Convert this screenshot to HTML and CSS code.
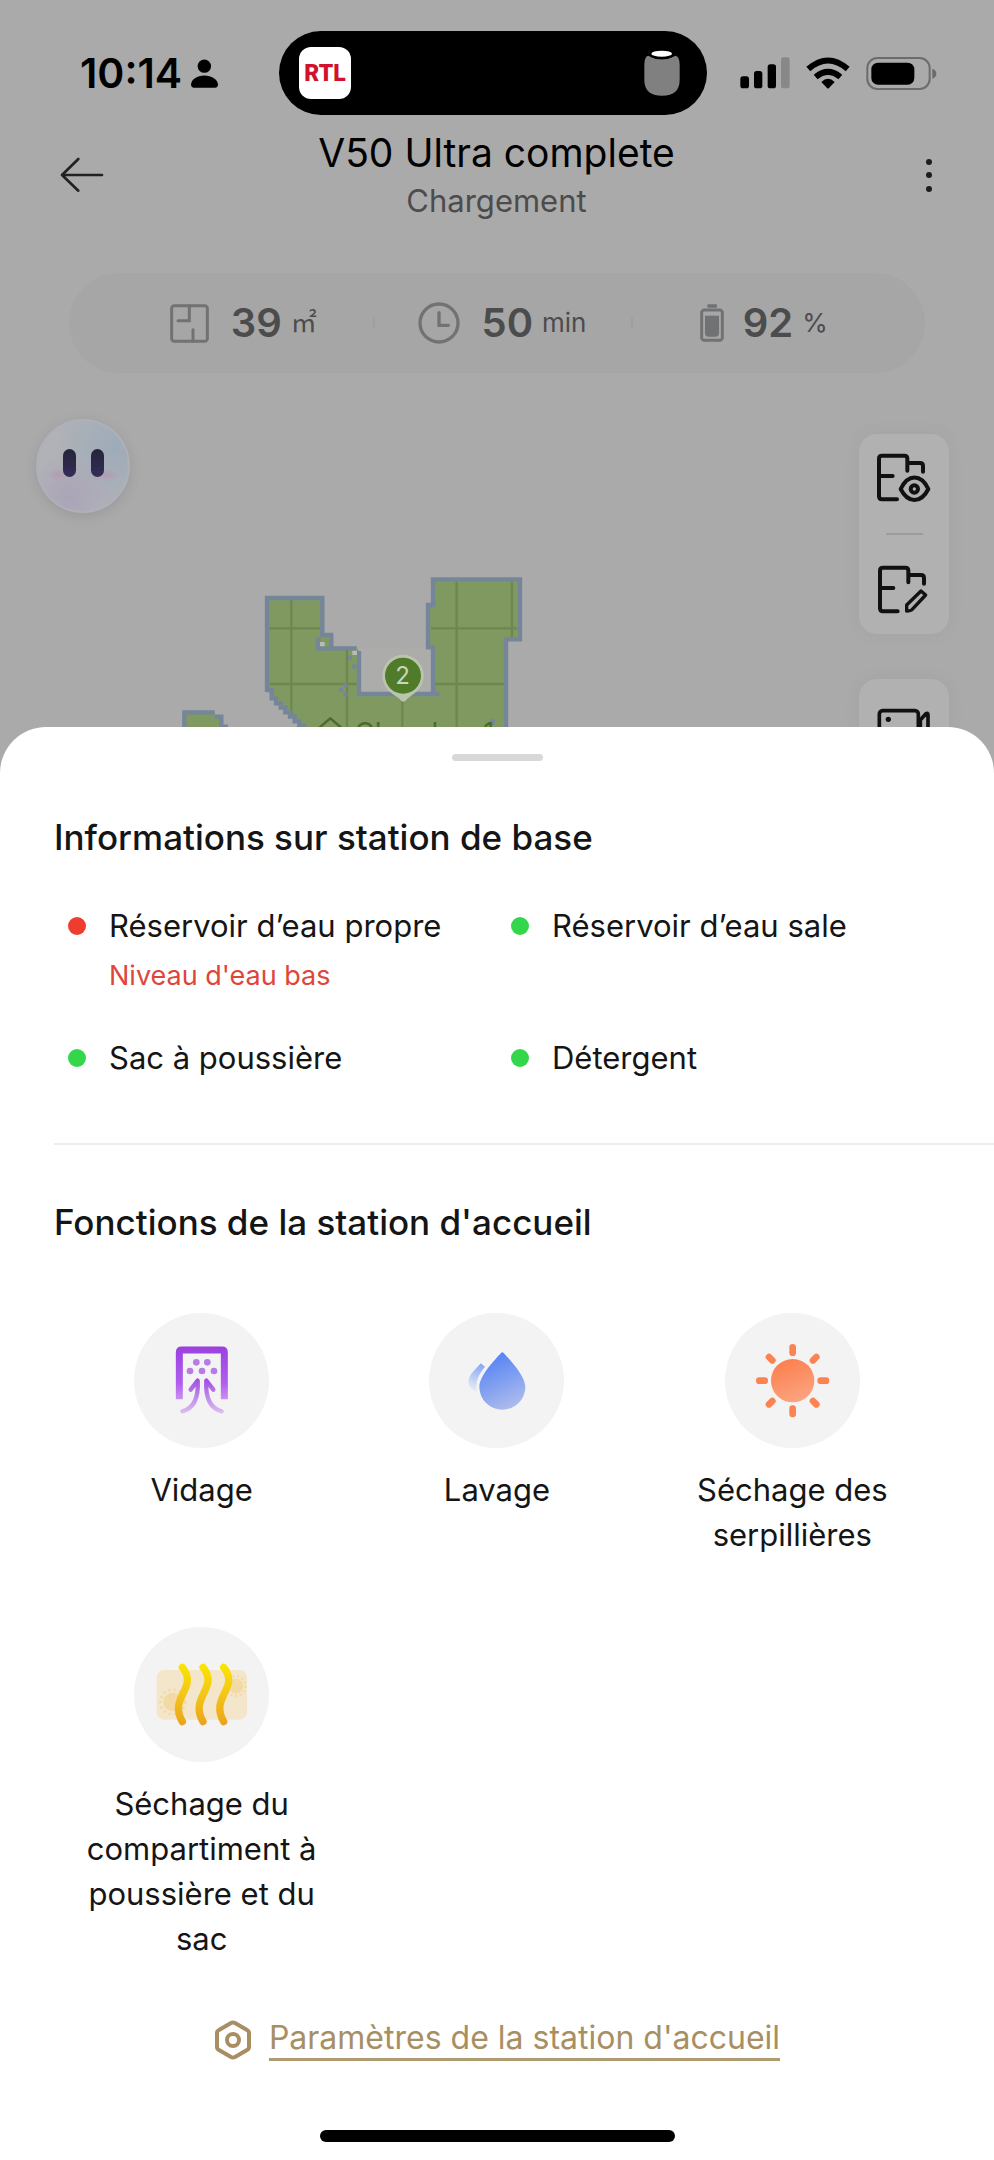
FILE: index.html
```html
<!DOCTYPE html>
<html lang="fr">
<head>
<meta charset="utf-8">
<meta name="viewport" content="width=device-width, initial-scale=1">
<title>V50 Ultra complete</title>
<link rel="stylesheet" href="styles.css">
</head>
<body>
<div class="screen">
  <div class="status-bar">
    <div class="status-time">
      <span>10:14</span>
      <svg width="27" height="29" viewBox="573 179 81 86" aria-hidden="true"><circle cx="613" cy="200" r="20"/><path d="M573 256C573 240 592 228 613 228S654 240 654 256Q653 265 645 265H582Q574 265 573 256Z"/></svg>
    </div>
    <div class="island">
      <span class="radio-logo">RTL</span>
      <svg width="36" height="46" viewBox="448 151 108 138" aria-hidden="true"><path fill="#808080" d="M460 168Q501 190 543 168Q555 172 555 195V240Q555 288 502 288T449 240V195Q449 172 460 168Z"/><ellipse cx="501" cy="162" rx="38" ry="17"/><ellipse cx="501" cy="162" rx="31" ry="9" fill="#fff"/></svg>
    </div>
    <div class="status-icons">
      <svg width="50" height="32" viewBox="735 170 150 96" aria-hidden="true"><rect x="736" y="228" width="26" height="36" rx="8"/><rect x="777" y="212" width="25" height="52" rx="8"/><rect x="818" y="192" width="25" height="72" rx="8"/><rect x="858" y="171" width="26" height="93" rx="8" fill="#888"/></svg>
      <svg width="44" height="32" viewBox="934 169 132 96" aria-hidden="true"><path fill="none" stroke="#000" stroke-width="18" d="M941 205Q1000 154 1059 205M963 229Q1000 198 1037 229"/><path d="M980 244Q1000 225 1020 244L1003 262Q1000 265 997 262Z"/></svg>
      <svg width="71" height="33" viewBox="1115 168 213 99" aria-hidden="true"><rect x="1119" y="171" width="187" height="93" rx="30" fill="none" stroke="#6c6c6c" stroke-width="6"/><rect x="1131" y="185" width="129" height="66" rx="20"/><path fill="#6c6c6c" d="M1314 203Q1326 207 1326 218T1314 233Z"/></svg>
    </div>
  </div>

  <header class="header">
    <button class="icon-button" aria-label="Retour"><svg width="44" height="36" viewBox="182 466 132 108" fill="none" stroke="#222" stroke-width="8" stroke-linecap="round" stroke-linejoin="round"><path d="M237 472L188 520L237 567M188 520H308"/></svg></button>
    <div class="titles">
      <h1>V50 Ultra complete</h1>
      <p>Chargement</p>
    </div>
    <button class="icon-button" aria-label="Plus d'options"><svg width="8" height="36" viewBox="0 0 8 36" fill="#1d1d1d"><circle cx="4" cy="5" r="3"/><circle cx="4" cy="18" r="3"/><circle cx="4" cy="32" r="3"/></svg></button>
  </header>

  <div class="stats">
    <div class="stat">
      <svg width="39" height="39" viewBox="384 119 117 117" fill="none" stroke="#707274" stroke-width="9" stroke-linecap="round"><rect x="389" y="124" width="107" height="107" rx="8"/><path d="M442 124V169H408M453 196V231"/></svg>
      <strong>39</strong><span class="unit">㎡</span>
    </div>
    <div class="stat">
      <svg width="42" height="42" viewBox="1125 114 126 126" fill="none" stroke="#707274" stroke-width="10" stroke-linecap="round"><circle cx="1188" cy="177" r="57"/><path d="M1188 146V184H1216"/></svg>
      <strong>50</strong><span class="unit">min</span>
    </div>
    <div class="stat">
      <svg width="24" height="38" viewBox="624 121 72 114" fill="#707274"><rect x="646" y="122" width="29" height="10" rx="3"/><rect x="629" y="139" width="62" height="91" rx="8" fill="none" stroke="#707274" stroke-width="9"/><path d="M639 156H681V208Q681 219 670 219H650Q639 219 639 208Z"/></svg>
      <strong>92</strong><span class="unit">%</span>
    </div>
  </div>

  <main class="stage">
    <svg class="map" viewBox="0 0 994 354" preserveAspectRatio="xMidYMin meet" role="img" aria-label="Carte">
      <g transform="translate(170 187) scale(.33333)">
        <path fill="#aeb0ad" d="M567 265V402H789V262H774Z" opacity=".4"/>
        <path fill="#7f9960" d="M291 114H457V225H484V265H560L567 273V402H789V262H774V135H789V58H1050V238H1008V520H425L291 390ZM43 520V457H134V470H154V520Z"/>
        <path fill="none" stroke="#6e8751" stroke-width="7" d="M364 120V465M531 270V510M697 408V510M860 65V510M1026 65V232M298 205H450M783 205H1042M300 372H560M795 372H1002"/>
        <path fill="none" stroke="#75869a" stroke-width="13" d="M484 225V265H560M444 232V265H484M291 396V114H457V225H490M567 273V402H808M789 402V262H774V135H789V58H1050V238H1008V510M291 390H305V415H318V430H332V443H346V457H360V470H374V484H388V497H402V510M43 510V457H134M134 470H154V500H174"/>
        <path fill="#75869a" d="M534 286h12v13h-12zM547 313h12v13h-12zM520 371h12v12h-12zM507 384h12v12h-12zM520 397h12v12h-12zM960 478h14v18h-14z"/>
        <path fill="#b9bbb7" d="M450 246h14v13h-14zM547 272h14v13h-14z"/>
        <path fill="#bac5af" d="M699 284A63 63 0 0 1 735 398L712 416Q700 434 688 416L663 398A63 63 0 0 1 699 284Z"/>
        <circle cx="699" cy="347" r="54" fill="#507b28"/>
        <text class="map-number" x="698" y="373" text-anchor="middle">2</text>
        <path fill="none" stroke="#4b6b2c" stroke-width="7" d="M447 504L481 475L515 504"/>
        <text class="map-room" x="553" y="548">Chambre 1</text>
      </g>
    </svg>
    <button class="assistant" aria-label="Assistant"><span class="face"><i></i><i></i></span></button>
    <div class="tools">
      <div class="tool-card">
        <button class="tool" aria-label="Affichage de la carte"><svg width="54" height="54" viewBox="114 124 162 162" fill="none" stroke="#111" stroke-width="12" stroke-linecap="round" stroke-linejoin="round"><path d="M174 269H129Q120 269 120 260V147Q120 138 129 138H196Q205 138 205 147V183M205 160H243Q252 160 252 169V186M120 199H161"/><path d="M185 238C207 192 246 192 268 238C246 282 207 282 185 238Z"/><circle cx="226" cy="238" r="11"/></svg></button>
        <hr>
        <button class="tool" aria-label="Modifier la carte"><svg width="54" height="54" viewBox="114 462 162 162" fill="none" stroke="#111" stroke-width="12" stroke-linecap="round" stroke-linejoin="round"><path d="M176 607H132Q123 607 123 598V485Q123 476 132 476H199Q208 476 208 485V520M208 498H246Q255 498 255 507V524M123 537H163"/><path stroke-width="10" d="M203 606V588L246 546L260 558L219 602Q215 606 203 606Z"/></svg></button>
      </div>
      <div class="tool-card">
        <button class="tool" aria-label="Caméra"><svg width="54" height="54" viewBox="110 860 162 162" fill="none" stroke="#111" stroke-width="11" stroke-linecap="round" stroke-linejoin="round"><rect x="117" y="904" width="117" height="96" rx="10"/><path d="M240 932L256 914Q263 908 263 918V984L240 965Z"/><circle cx="144" cy="930" r="8" fill="#111" stroke="none"/></svg></button>
      </div>
    </div>
  </main>

  <section class="sheet">
    <div class="handle"></div>
    <h2>Informations sur station de base</h2>
    <ul class="states">
      <li class="low"><span>Réservoir d’eau propre</span><small>Niveau d'eau bas</small></li>
      <li><span>Réservoir d’eau sale</span></li>
      <li><span>Sac à poussière</span></li>
      <li><span>Détergent</span></li>
    </ul>
    <hr class="rule">
    <h2>Fonctions de la station d'accueil</h2>
    <div class="functions">
      <button class="function">
        <svg class="disc" viewBox="42 38 405 405" aria-hidden="true">
          <defs>
            <linearGradient id="violet" gradientUnits="userSpaceOnUse" x1="0" y1="140" x2="0" y2="340"><stop stop-color="#9a40e0"/><stop offset=".55" stop-color="#b15fee"/><stop offset="1" stop-color="#dfbff5"/></linearGradient>
            <linearGradient id="arrow" gradientUnits="userSpaceOnUse" x1="0" y1="235" x2="0" y2="340"><stop stop-color="#a04be2"/><stop offset="1" stop-color="#dcc0f2"/></linearGradient>
          </defs>
          <path fill="none" stroke="url(#violet)" stroke-width="21" d="M178 297V156Q178 149 185 149H306Q313 149 313 156V297" stroke-linejoin="round"/>
          <g fill="#b57ce6"><circle cx="229" cy="186" r="10"/><circle cx="262" cy="186" r="10"/><circle cx="210" cy="212" r="10"/><circle cx="246" cy="212" r="10"/><circle cx="282" cy="212" r="10"/></g>
          <path fill="none" stroke="url(#arrow)" stroke-width="13" stroke-linecap="round" stroke-linejoin="round" d="M212 268L233 241C236 290 222 324 187 333M280 268L259 241C256 290 270 324 305 333"/>
        </svg>
        <span>Vidage</span>
      </button>
      <button class="function">
        <svg class="disc" viewBox="928 38 405 405" aria-hidden="true">
          <defs>
            <linearGradient id="water" x1=".3" y1="0" x2=".7" y2="1"><stop stop-color="#5081f5"/><stop offset="1" stop-color="#b0bdec"/></linearGradient>
            <linearGradient id="mist" x1=".6" y1="0" x2=".4" y2="1"><stop stop-color="#86a8f3"/><stop offset="1" stop-color="#eef0f6"/></linearGradient>
          </defs>
          <path fill="url(#mist)" d="M1083 189L1096 199C1076 222 1065 248 1072 277C1052 270 1044 254 1047 240C1050 220 1070 205 1083 189Z"/>
          <path fill="url(#water)" d="M1144 158Q1148 154 1152 158C1166 174 1217 225 1217 260A69 68 0 0 1 1079 260C1079 225 1130 174 1144 158Z"/>
        </svg>
        <span>Lavage</span>
      </button>
      <button class="function">
        <svg class="disc" viewBox="194 38 405 405" aria-hidden="true">
          <defs><linearGradient id="sun" x1=".3" y1="0" x2=".7" y2="1"><stop stop-color="#fb7f4e"/><stop offset="1" stop-color="#fba582"/></linearGradient></defs>
          <circle cx="397" cy="241" r="65" fill="url(#sun)"/>
          <path stroke="#fb8252" stroke-width="20" stroke-linecap="round" d="M397 141V157M397 325V341M297 241H313M481 241H497M326 170L336 180M458 302L468 312M326 312L336 302M458 180L468 170"/>
        </svg>
        <span>Séchage des serpillières</span>
      </button>
      <button class="function">
        <svg class="disc" viewBox="42 51 405 405" aria-hidden="true">
          <defs><linearGradient id="heat" gradientUnits="userSpaceOnUse" x1="0" y1="162" x2="0" y2="345"><stop stop-color="#fbe500"/><stop offset=".5" stop-color="#f3c618"/><stop offset="1" stop-color="#eca21c"/></linearGradient></defs>
          <rect x="110" y="180" width="271" height="149" rx="22" fill="#f3e6ca"/>
          <g fill="#f2d9a6" stroke="#f2d9a6" stroke-width="8"><circle cx="158" cy="276" r="24"/><circle cx="158" cy="276" r="37" fill="none" stroke-dasharray="6 10"/><circle cx="348" cy="228" r="18"/><circle cx="348" cy="228" r="29" fill="none" stroke-dasharray="5 9"/></g>
          <path fill="none" stroke="url(#heat)" stroke-width="22" stroke-linecap="round" d="M187 172C237 235 144 260 187 335M249 172C299 235 206 260 249 335M311 172C361 235 268 260 311 335"/>
        </svg>
        <span>Séchage du compartiment à poussière et du sac</span>
      </button>
    </div>
    <a class="settings" href="#parametres">
      <svg width="38" height="40" viewBox="0 0 38 40" fill="none" stroke="#a88f63" stroke-width="4" stroke-linejoin="round" aria-hidden="true"><path d="M17 3Q19 2 21 3L33 10Q35 11 35 13V27Q35 29 33 30L21 37Q19 38 17 37L5 30Q3 29 3 27V13Q3 11 5 10Z"/><circle cx="19" cy="20" r="6"/></svg>
      <span>Paramètres de la station d'accueil</span>
    </a>
    <div class="home-bar"></div>
  </section>
</div>
</body>
</html>
```
FILE: styles.css
```css
* { box-sizing: border-box; }
body {
  margin: 0;
  background: #aaa;
  color: #151515;
  font-family: Inter, "Noto Sans CJK SC", sans-serif;
}
h1, h2, p, ul { margin: 0; padding: 0; font-weight: 400; }
button { padding: 0; border: 0; background: none; color: inherit; font: inherit; cursor: pointer; }
svg { display: block; flex: none; }
.screen { display: flex; flex-direction: column; min-height: 100vh; }

.status-bar {
  display: grid;
  grid-template-columns: 1fr auto 1fr;
  align-items: center;
  padding: 31px 8px 0 0;
}
.status-time {
  display: flex;
  align-items: center;
  gap: 9px;
  padding-left: 80px;
  color: #000;
  font-size: 41px;
  font-weight: 600;
  line-height: 48px;
}
.island {
  display: flex;
  align-items: center;
  justify-content: space-between;
  width: 428px;
  height: 84px;
  padding: 0 27px 0 20px;
  border-radius: 42px;
  background: #000;
}
.radio-logo {
  display: grid;
  place-items: center;
  width: 52px;
  height: 52px;
  border-radius: 12px;
  background: #fff;
  color: #d0122d;
  font-family: Roboto, Inter, sans-serif;
  font-size: 23px;
  font-weight: 900;
}
.status-icons { display: flex; align-items: center; justify-content: flex-end; gap: 16px; padding-right: 49px; }

.header { display: flex; align-items: center; justify-content: space-between; padding: 12px 61px 4px 60px; }
.icon-button { display: flex; width: 44px; height: 60px; align-items: center; }
.icon-button:last-child { justify-content: flex-end; }
.titles { text-align: center; }
.titles h1 { color: #000; font-size: 39px; line-height: 52px; }
.titles p { color: #4c4c4c; font-size: 31px; line-height: 44px; }

.stats {
  display: grid;
  grid-template-columns: repeat(3, 1fr);
  align-items: center;
  height: 100px;
  margin: 46px 69px 0;
  padding: 0 35px 0 45px;
  border-radius: 50px;
  background: #a6a6a6;
  color: #4c4c4c;
}
.stat { display: flex; align-items: center; justify-content: center; gap: 9px; }
.stat svg { margin-right: 13px; }
.stat:last-child svg { margin-right: 10px; }
.stat:last-child { padding-left: 6px; }
.stat + .stat { background: linear-gradient(#9f9f9f, #9f9f9f) left center / 2px 12px no-repeat; }
.stat strong { font-size: 40px; font-weight: 600; line-height: 48px; }
.unit { font-size: 26px; line-height: 48px; }

.stage {
  position: relative;
  display: flex;
  align-items: flex-start;
  justify-content: space-between;
  height: 354px;
  padding: 0 45px 0 36px;
  overflow: hidden;
}
.map { position: absolute; inset: 0; width: 100%; height: 100%; }
.map-number { fill: #c9d6bd; font-size: 72px; }
.map-room { fill: #4b6b2c; font-size: 84px; }
.assistant { position: relative; margin-top: 46px; }
.face {
  display: flex;
  align-items: center;
  justify-content: center;
  gap: 15px;
  width: 94px;
  height: 94px;
  padding-bottom: 6px;
  border: 2px solid #b0b0b8;
  border-radius: 50%;
  background:
    radial-gradient(ellipse 11px 6px at 20px 54px, #b49baf, transparent),
    radial-gradient(ellipse 13px 6px at 68px 54px, #b49baf, transparent),
    radial-gradient(circle at 35% 85%, #aba4b8, transparent 45%),
    radial-gradient(circle at 85% 30%, #9dabb9, transparent 60%),
    #b0b2b7;
  box-shadow: 0 3px 12px rgba(70, 70, 80, .16);
}
.face i { width: 13px; height: 28px; border-radius: 7px; background: linear-gradient(#24243a, #352d58); }
.tools { position: relative; display: flex; flex-direction: column; gap: 45px; width: 90px; margin-top: 61px; }
.tool-card {
  display: flex;
  flex-direction: column;
  align-items: center;
  gap: 28px;
  padding: 17px 0;
  border-radius: 18px;
  background: #b1b1b1;
  box-shadow: 0 0 16px rgba(90, 90, 90, .08);
}
.tool-card hr { width: 37px; height: 2px; margin: 0; border: 0; background: #9c9c9c; }

.sheet {
  display: flex;
  flex: 1;
  flex-direction: column;
  padding: 27px 0 18px;
  border-radius: 46px 46px 0 0;
  background: #fff;
}
.handle { width: 91px; height: 7px; margin: 0 auto 52px; border-radius: 4px; background: #d8d8d8; }
.sheet h2 { padding: 0 54px; font-size: 35px; font-weight: 500; line-height: 48px; }
.states { display: grid; grid-template-columns: 1fr 1fr; row-gap: 36px; padding: 42px 54px 0; list-style: none; }
.states li { position: relative; display: flex; flex-direction: column; gap: 4px; padding-left: 55px; font-size: 31px; line-height: 46px; }
.states li::before {
  content: "";
  position: absolute;
  top: 14px;
  left: 14px;
  width: 18px;
  height: 18px;
  border-radius: 50%;
  background: #34d74c;
}
.states .low::before { background: #ee3d2e; }
.states small { color: #de463b; font-size: 27px; line-height: 46px; }
.rule { width: calc(100% - 54px); height: 2px; margin: 62px 0 53px 54px; border: 0; background: #ececec; }
.functions { display: grid; grid-template-columns: repeat(3, 1fr); row-gap: 70px; padding: 67px 54px 0; }
.function { display: flex; flex-direction: column; align-items: center; justify-content: flex-start; gap: 19px; font-size: 31px; line-height: 45px; }
.function span { max-width: 240px; }
.disc { width: 135px; height: 135px; border-radius: 50%; background: #f3f3f3; }
.settings {
  display: flex;
  align-items: center;
  align-self: center;
  gap: 17px;
  margin-top: 57px;
  color: #a88f63;
  font-size: 32px;
  line-height: 40px;
  text-decoration: none;
}
.settings span { border-bottom: 3px solid #b09a72; }
.home-bar { width: 355px; height: 12px; margin: auto auto 0; border-radius: 6px; background: #000; }
```
